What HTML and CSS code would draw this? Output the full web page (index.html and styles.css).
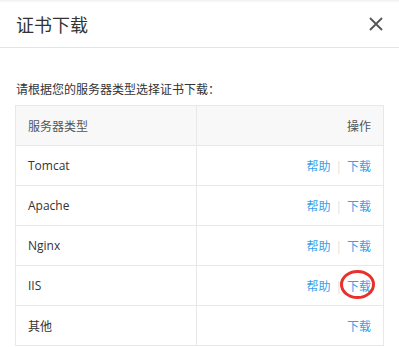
FILE: index.html
```html
<!DOCTYPE html>
<html lang="zh-CN">
<head>
    <meta charset="UTF-8">
    <meta name="viewport" content="width=device-width, initial-scale=1.0">
    <title>证书下载</title>
    <link rel="stylesheet" href="styles.css">
</head>
<body>
    <div class="dialog">
        <header class="dialog-header">
            <span class="dialog-title">证书下载</span>
            <button class="close" aria-label="关闭">
                <svg width="14" height="14" viewBox="0 0 14 14">
                    <path d="M1 1 L13 13 M13 1 L1 13" stroke="#555" stroke-width="1.8" fill="none"/>
                </svg>
            </button>
        </header>

        <div class="dialog-body">
            <p class="tip">请根据您的服务器类型选择证书下载：</p>
            <table class="cert-table">
                <thead>
                    <tr>
                        <th class="type">服务器类型</th>
                        <th class="ops">操作</th>
                    </tr>
                </thead>
                <tbody>
                    <tr>
                        <td>Tomcat</td>
                        <td class="ops"><a href="#">帮助</a><span class="sep">|</span><a href="#">下载</a></td>
                    </tr>
                    <tr>
                        <td>Apache</td>
                        <td class="ops"><a href="#">帮助</a><span class="sep">|</span><a href="#">下载</a></td>
                    </tr>
                    <tr>
                        <td>Nginx</td>
                        <td class="ops"><a href="#">帮助</a><span class="sep">|</span><a href="#">下载</a></td>
                    </tr>
                    <tr>
                        <td>IIS</td>
                        <td class="ops"><a href="#">帮助</a><span class="sep">|</span><a href="#" class="marked">下载</a></td>
                    </tr>
                    <tr>
                        <td>其他</td>
                        <td class="ops"><a href="#">下载</a></td>
                    </tr>
                </tbody>
            </table>
        </div>
    </div>
</body>
</html>
```

FILE: styles.css
```css
body, p {
    margin: 0;
    padding: 0;
}

body {
    font-family: "Open Sans", "Noto Sans CJK SC", sans-serif;
    color: #333;
    background-color: #ffffff;
}

.dialog-header {
    display: flex;
    justify-content: space-between;
    align-items: center;
    height: 47px;
    padding: 0 15px 0 16px;
    border-bottom: 1px solid #e5e5e5;
    box-shadow: inset 0 3px 3px -2px rgba(0, 0, 0, 0.08);
}

.dialog-title {
    font-family: "Noto Sans CJK SC", sans-serif;
    font-size: 18px;
    color: #333;
    padding-top: 1px;
}

.close {
    border: none;
    background: none;
    padding: 0;
    width: 16px;
    height: 16px;
    display: flex;
    align-items: center;
    justify-content: center;
    cursor: pointer;
}

.dialog-body {
    padding: 32px 15px 0 15px;
}

.tip {
    font-size: 12px;
    line-height: 20px;
    margin-bottom: 5px;
    padding-left: 1px;
}

.cert-table {
    width: 100%;
    border-collapse: collapse;
    font-size: 12px;
    table-layout: fixed;
}

.cert-table th, .cert-table td {
    height: 39px;
    padding: 0 12px;
    border: 1px solid #e8e8e8;
    text-align: left;
    font-weight: normal;
}

.cert-table .type {
    width: 42.5%;
}

.cert-table th {
    background-color: #f8f8f8;
    color: #555;
}

.cert-table .ops {
    text-align: right;
    padding-right: 12px;
}

.cert-table a {
    color: #3a9fe6;
    text-decoration: none;
}

.sep {
    color: #ddd;
    margin: 0 5px;
}

.marked {
    position: relative;
}

.marked::after {
    content: "";
    position: absolute;
    left: -7px;
    top: -8px;
    width: 35px;
    height: 29px;
    border: 3px solid #e8302c;
    border-radius: 50%;
    box-sizing: border-box;
}
```
